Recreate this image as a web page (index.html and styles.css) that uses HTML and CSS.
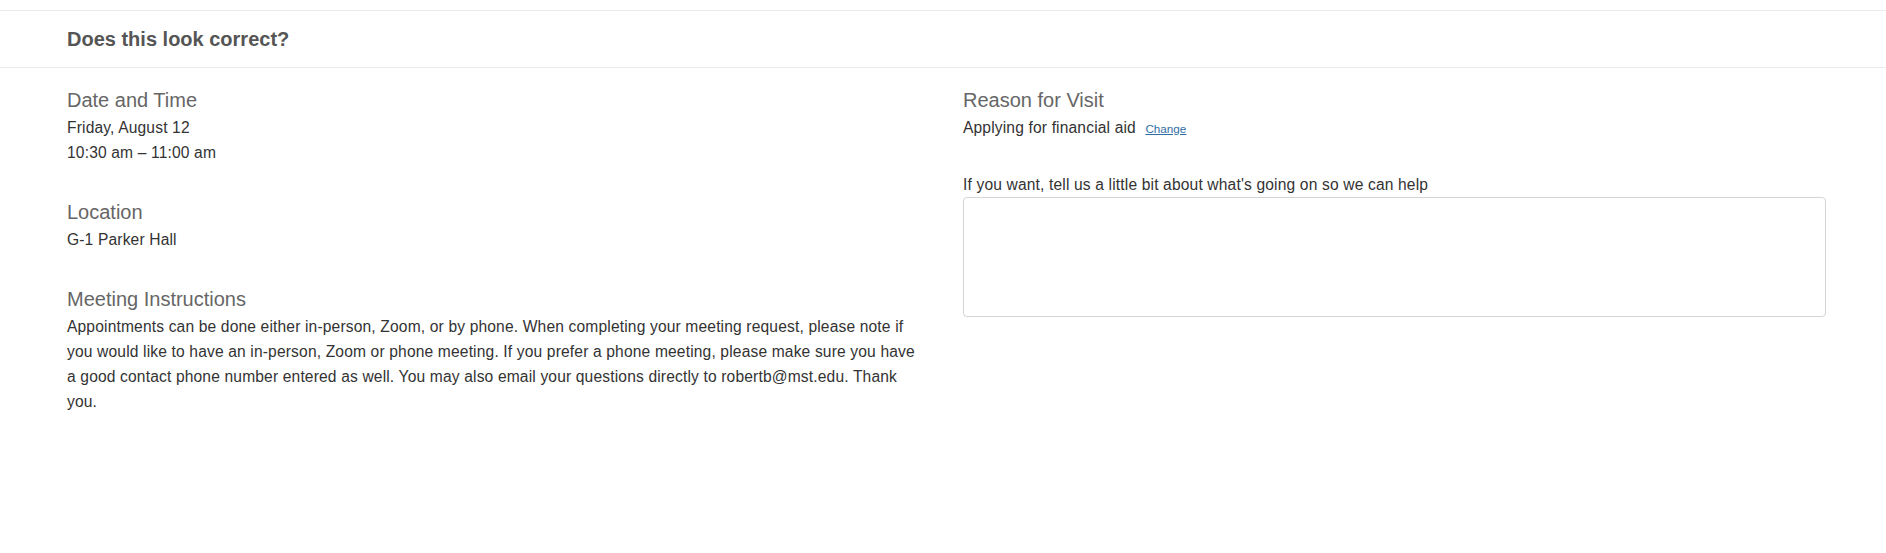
FILE: index.html
```html
<!DOCTYPE html>
<html lang="en">
<head>
<meta charset="utf-8">
<title>Does this look correct?</title>
<link rel="stylesheet" href="styles.css">
</head>
<body>
<div class="page">
  <div class="header">
    <h2 class="header-title">Does this look correct?</h2>
  </div>
  <div class="content">
    <div class="col col-left">
      <div class="section">
        <h3 class="section-title">Date and Time</h3>
        <p class="text">Friday, August 12</p>
        <p class="text">10:30 am – 11:00 am</p>
      </div>
      <div class="section">
        <h3 class="section-title">Location</h3>
        <p class="text">G-1 Parker Hall</p>
      </div>
      <div class="section">
        <h3 class="section-title">Meeting Instructions</h3>
        <p class="text">Appointments can be done either in-person, Zoom, or by phone. When completing your meeting request, please note if you would like to have an in-person, Zoom or phone meeting. If you prefer a phone meeting, please make sure you have a good contact phone number entered as well. You may also email your questions directly to robertb@mst.edu. Thank you.</p>
      </div>
    </div>
    <div class="col">
      <div class="section">
        <h3 class="section-title">Reason for Visit</h3>
        <p class="text">Applying for financial aid <a class="change-link" href="#">Change</a></p>
      </div>
      <div class="field">
        <label class="field-label" for="notes">If you want, tell us a little bit about what's going on so we can help</label>
        <textarea class="field-input" id="notes"></textarea>
      </div>
    </div>
  </div>
</div>
</body>
</html>
```
FILE: styles.css
```css
html, body {
  margin: 0;
  padding: 0;
  background: #fff;
}

body {
  font-family: "Liberation Sans", Arial, sans-serif;
  color: #333;
}

.page {
  padding-top: 10px;
}

.header {
  border-top: 1px solid #ebebeb;
  border-bottom: 1px solid #ebebeb;
  padding: 17px 67px;
}

.header-title {
  margin: 0;
  font-size: 20px;
  line-height: 22px;
  font-weight: bold;
  color: #555;
}

.content {
  display: grid;
  grid-template-columns: 1fr 1fr;
  column-gap: 33px;
  padding: 21px 60px 0 67px;
}

.col-left {
  padding-right: 8px;
}

.section + .section {
  margin-top: 36px;
}

.section-title {
  margin: 0 0 4px;
  font-size: 20px;
  line-height: 22px;
  font-weight: normal;
  color: #666;
}

.text {
  margin: 0;
  font-size: 15.6px;
  line-height: 25px;
  letter-spacing: 0.15px;
  color: #333;
}

.change-link {
  margin-left: 5px;
  font-size: 11.7px;
  letter-spacing: 0;
  color: #2f6ea5;
  text-decoration: underline;
}

.field {
  margin-top: 31px;
}

.field-label {
  display: block;
  font-size: 15.6px;
  line-height: 25px;
  letter-spacing: 0.15px;
  color: #333;
}

.field-input {
  display: block;
  box-sizing: border-box;
  width: 100%;
  height: 120px;
  margin: 0;
  border: 1px solid #d4d4d4;
  border-radius: 4px;
  resize: none;
  font-family: inherit;
  background: #fff;
}
```
